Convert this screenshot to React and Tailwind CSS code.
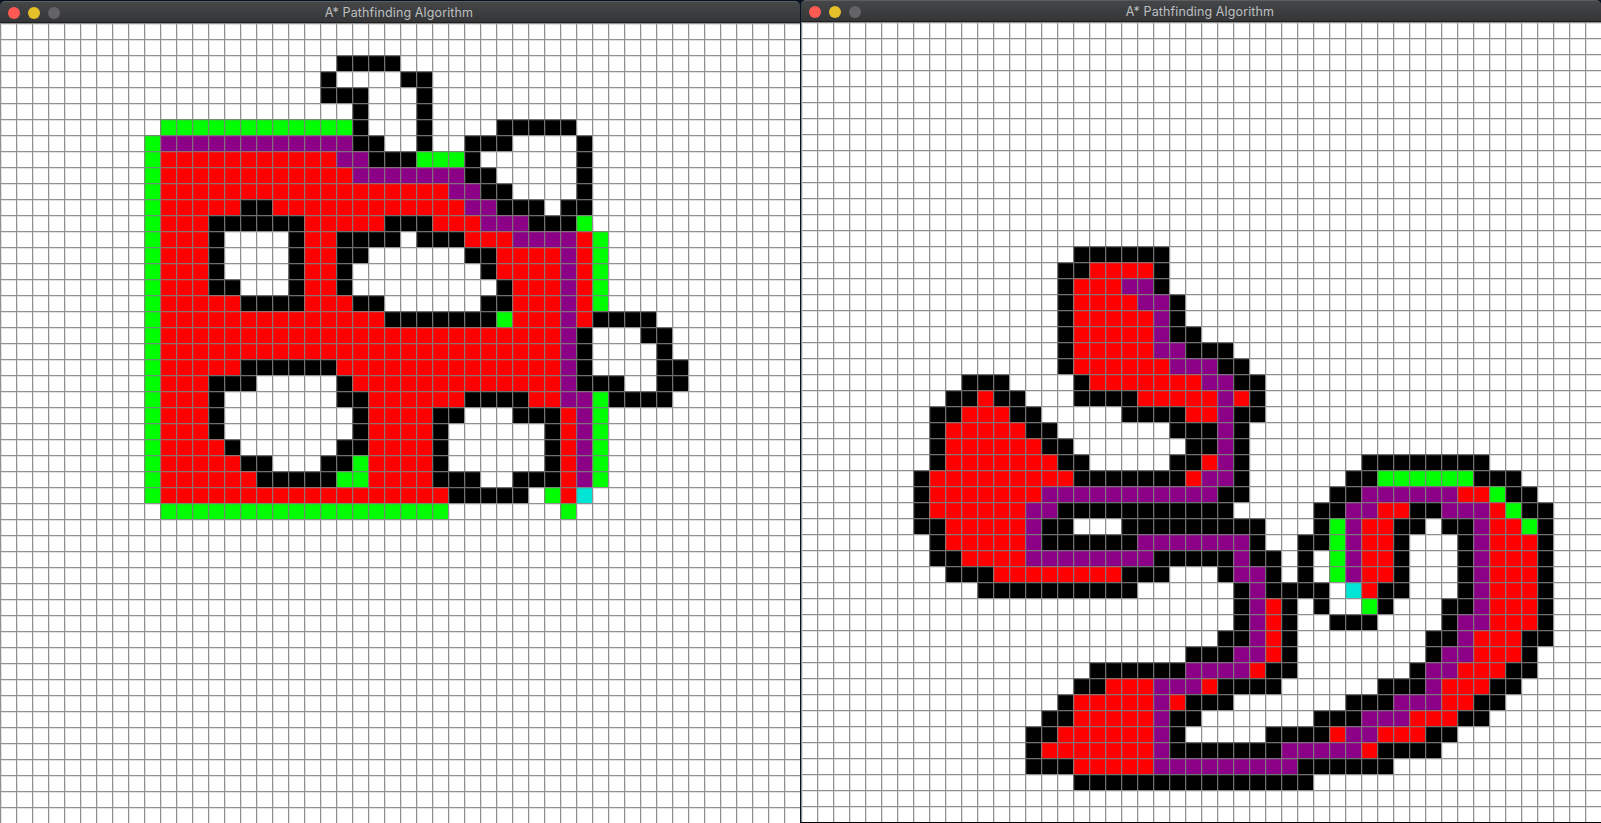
import React from "react";

const SIZE = 50;

const FILL = {
  w: "bg-white",
  b: "bg-black",
  r: "bg-[#ff0000]",
  g: "bg-[#00ff00]",
  p: "bg-[#8b0087]",
  c: "bg-[#00e5d5]",
};

// Each key is a grid row; each token is a colour code followed by a column or a column range.
const LEFT = {
  2: "b21-24",
  3: "b20 b25-26",
  4: "b20-22 b26",
  5: "b22 b26",
  6: "g10-21 b22 b26 b31-35",
  7: "g9 p10-21 b22-23 b26 b29-31 b36",
  8: "g9 r10-20 p21-22 b23-25 g26-28 b29 b36",
  9: "g9 r10-21 p22-28 b29-30 b36",
  10: "g9 r10-27 p28-29 b30-31 b36",
  11: "g9 r10-28 b15-16 p29-30 b31-33 b35-36",
  12: "g9 r10-29 b13-18 b24-26 p30-32 b33-35 g36",
  13: "g9 r10-12 b13 b18 r19-20 b21-24 b26-28 r29-31 p32-35 r36 g37",
  14: "g9 r10-12 b13 b18 r19-20 b21-22 b29-30 r31-34 p35 r36 g37",
  15: "g9 r10-12 b13 b18 r19-20 b21 b30 r31-34 p35 r36 g37",
  16: "g9 r10-12 b13-14 b18 r19-20 b21 b31 r32-34 p35 r36 g37",
  17: "g9 r10-14 b15-18 r19-21 b22-23 b30-31 r32-34 p35 r36 g37",
  18: "g9 r10-23 b24-30 g31 r32-34 p35 r36 b37-40",
  19: "g9 r10-34 p35 b36 b40-41",
  20: "g9 r10-34 p35 b36 b41",
  21: "g9 r10-34 b15-20 p35 b36 b41-42",
  22: "g9 r10-12 b13-15 b21 r22-34 p35 b36-38 b41-42",
  23: "g9 r10-12 b13 b21-22 r23-28 b29-32 r33-34 p35-36 g37 b38-41",
  24: "g9 r10-12 b13 b22 r23-26 b27-28 b32-34 r35 p36 g37",
  25: "g9 r10-12 b13 b22 r23-26 b27 b34 r35 p36 g37",
  26: "g9 r10-13 b14 b21-22 r23-26 b27 b34 r35 p36 g37",
  27: "g9 r10-14 b15-16 b20-21 g22 r23-26 b27 b34 r35 p36 g37",
  28: "g9 r10-15 b16-20 g21-22 r23-26 b27-29 b32-34 r35 p36 g37",
  29: "g9 r10-27 b28-32 g34 r35 c36",
  30: "g10-27 g35",
};

const RIGHT = {
  14: "b17-22",
  15: "b16-17 r18-21 b22",
  16: "b16 r17-19 p20-21 b22",
  17: "b16 r17-20 p21-22 b23",
  18: "b16 r17-21 p22 b23",
  19: "b16 r17-21 p22 b23-24",
  20: "b16 r17-21 p22-23 b24-26",
  21: "b16 r17-22 p23-25 b26-27",
  22: "b10-12 b17 r18-24 p25-26 b27-28",
  23: "b9-10 r11 b12-13 b17-20 r21-25 p26 r27 b28",
  24: "b8-9 r10-12 b13-14 b20-23 r24-25 p26 b27-28",
  25: "b8 r9-13 b14-15 b23-25 p26 b27",
  26: "b8 r9-14 b15-16 b24-25 p26 b27",
  27: "b8 r9-15 b16-17 b23-24 r25 p26 b27 b35-42",
  28: "b7 r8-16 b17-23 r24 p25-26 b27 b34-35 g36-41 b42-44",
  29: "b7 r8-14 p15-25 b26-27 b33-34 p35-40 r41-42 g43 b44-45",
  30: "b7 r8-13 p14-15 b16-26 b32-33 p34-35 r36-37 b38-39 p40-42 r43 g44 b45-46",
  31: "b7-8 r9-13 p14 b15-16 b20-28 b32 g33 p34 r35-36 b37-38 b40-41 p42 r43-44 g45 b46",
  32: "b8 r9-13 p14 b15-20 p21-27 b28 b31-32 g33 p34 r35-36 b37 b41 p42 r43-45 b46",
  33: "b8-9 r10-13 p14-21 b22-26 p27 b28-29 b31 g33 p34 r35-36 b37 b41 p42 r43-45 b46",
  34: "b9-11 r12-19 b20-22 b26 p27-28 b29 b31 g33 p34 r35-36 b37 b41 p42 r43-45 b46",
  35: "b11-20 b27 p28 b29-32 c34 r35 b36-37 b41 p42 r43-45 b46",
  36: "b27 p28 r29 b30 b32 g35 b36 b40-41 p42 r43-45 b46",
  37: "b27 p28 r29 b30 b33-35 b40 p41-42 r43-45 b46",
  38: "b26-27 p28 r29 b30 b39-40 p41 r42-44 b45-46",
  39: "b24-26 p27-28 r29 b30 b39 p40-41 r42-44 b45",
  40: "b18-23 p24-27 r28 b29-30 b38 p39-40 r41-43 b44-45",
  41: "b17-18 r19-21 p22-24 r25 b26-29 b36-38 p39 r40-42 b43-44",
  42: "b16 r17-21 p22 r23 b24-26 b34-36 p37-39 r40-41 b42-43",
  43: "b15-16 r17-21 p22 b23-24 b32-34 p35-37 r38-40 b41-42",
  44: "b14-15 r16-21 p22 b23 b29-32 r33 p34-35 r36-38 b39-40",
  45: "b14 r15-21 p22 b23-29 p30-34 r35 b36-39",
  46: "b14-16 r17-21 p22-30 b31-36",
  47: "b17-31",
};

function expand(spec) {
  const row = Array(SIZE).fill("w");
  if (!spec) return row;
  for (const token of spec.split(" ")) {
    const [from, to = from] = token.slice(1).split("-").map(Number);
    row.fill(token[0], from, to + 1);
  }
  return row;
}

function Board({ rows }) {
  return (
    <div className="grid w-[800px] shrink-0 grid-cols-[repeat(50,16px)] auto-rows-[16px]">
      {Array.from({ length: SIZE }, (_, y) =>
        expand(rows[y]).map((code, x) => (
          <div
            key={`${x}-${y}`}
            className={`border-t border-l border-[rgba(128,128,128,0.87)] shadow-[inset_1px_1px_0_rgba(128,128,128,0.24)] ${FILL[code]}`}
          />
        ))
      )}
    </div>
  );
}

function TitleBar() {
  return (
    <div className="grid h-[22px] w-full shrink-0 grid-cols-[1fr_auto_1fr] items-center rounded-t-[5px] border-t border-b border-t-[#5b5d5f] border-b-[#1c1c1d] bg-linear-to-b from-[#444648] to-[#353638] px-2 pt-px">
      <div className="flex gap-2">
        <span className="size-3 rounded-full bg-[#ff5a52]" />
        <span className="size-3 rounded-full bg-[#e6c029]" />
        <span className="size-3 rounded-full bg-[#646467]" />
      </div>
      <span className="pt-px pr-[2px] font-['Inter',sans-serif] text-[12.5px] leading-none tracking-[0.01em] text-[#bebfc0]">
        A* Pathfinding Algorithm
      </span>
      <div />
    </div>
  );
}

export default function App() {
  return (
    <div className="flex h-[823px] w-[1601px] overflow-hidden bg-[#061222]">
      <section className="flex w-[800px] flex-col pt-px">
        <TitleBar />
        <Board rows={LEFT} />
      </section>
      <section className="ml-px flex w-[800px] flex-col">
        <TitleBar />
        <Board rows={RIGHT} />
        <div className="h-px bg-black" />
      </section>
    </div>
  );
}
